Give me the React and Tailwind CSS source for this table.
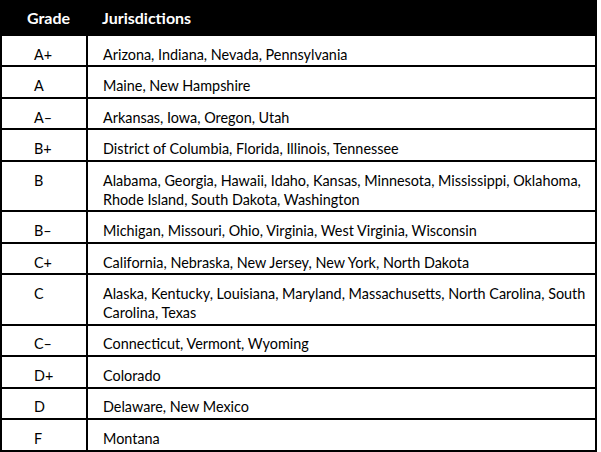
import React from 'react';

const rows = [
  { grade: 'A+', lines: ['Arizona, Indiana, Nevada, Pennsylvania'] },
  { grade: 'A', lines: ['Maine, New Hampshire'] },
  { grade: 'A–', lines: ['Arkansas, Iowa, Oregon, Utah'] },
  { grade: 'B+', lines: ['District of Columbia, Florida, Illinois, Tennessee'] },
  {
    grade: 'B',
    lines: [
      'Alabama, Georgia, Hawaii, Idaho, Kansas, Minnesota, Mississippi, Oklahoma,',
      'Rhode Island, South Dakota, Washington',
    ],
  },
  { grade: 'B–', lines: ['Michigan, Missouri, Ohio, Virginia, West Virginia, Wisconsin'] },
  { grade: 'C+', lines: ['California, Nebraska, New Jersey, New York, North Dakota'] },
  {
    grade: 'C',
    lines: [
      'Alaska, Kentucky, Louisiana, Maryland, Massachusetts, North Carolina, South',
      'Carolina, Texas',
    ],
  },
  { grade: 'C–', lines: ['Connecticut, Vermont, Wyoming'] },
  { grade: 'D+', lines: ['Colorado'] },
  { grade: 'D', lines: ['Delaware, New Mexico'] },
  { grade: 'F', lines: ['Montana'] },
];

export default function App() {
  return (
    <div className="w-[601px] h-[452px] bg-white font-['Lato','Liberation_Sans',sans-serif] text-black">
      <div className="w-[597px] border-x-2 border-b-2 border-black">
        <div className="flex h-[36px] bg-black text-white font-bold text-[16px] items-center -mx-[2px] pl-[2px]">
          <div className="w-[86px] pl-[25px]">Grade</div>
          <div className="pl-[14px]">Jurisdictions</div>
        </div>
        {rows.map((row, i) => (
          <div
            key={row.grade}
            className={`flex text-[14.4px] leading-[19px] ${i < rows.length - 1 ? 'border-b-2 border-black' : ''}`}
          >
            <div className="w-[86px] shrink-0 border-r-2 border-black pl-[32px] pt-[8.6px] pb-[1.9px]">
              {row.grade}
            </div>
            <div className="flex-1 pl-[15px] pt-[8.6px] pb-[1.9px] whitespace-nowrap">
              {row.lines.map((l) => (
                <div key={l}>{l}</div>
              ))}
            </div>
          </div>
        ))}
      </div>
    </div>
  );
}
